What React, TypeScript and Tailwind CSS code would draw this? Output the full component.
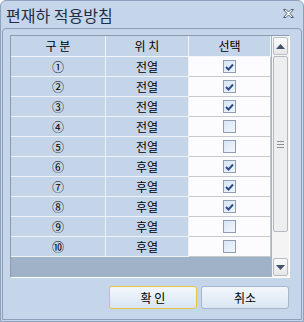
import React from "react";

const rows = [
  { no: "①", pos: "전열", on: true },
  { no: "②", pos: "전열", on: true },
  { no: "③", pos: "전열", on: true },
  { no: "④", pos: "전열", on: false },
  { no: "⑤", pos: "전열", on: false },
  { no: "⑥", pos: "후열", on: true },
  { no: "⑦", pos: "후열", on: true },
  { no: "⑧", pos: "후열", on: true },
  { no: "⑨", pos: "후열", on: false },
  { no: "⑩", pos: "후열", on: false },
];

function CheckBox({ on }: { on: boolean }) {
  return (
    <div className="flex h-[13px] w-[13px] items-center justify-center border border-[#8f9db3] bg-gradient-to-br from-[#d9e6f6] to-[#f1f6fc]">
      {on && (
        <svg width="9" height="8" viewBox="0 0 9 8">
          <path d="M1 4 L3.5 6.5 L8 1.5" fill="none" stroke="#2b4c8c" strokeWidth="2" />
        </svg>
      )}
    </div>
  );
}

function Arrow({ up }: { up: boolean }) {
  return (
    <svg width="9" height="5" viewBox="0 0 9 5">
      <path d={up ? "M0 5 L4.5 0 L9 5 Z" : "M0 0 L4.5 5 L9 0 Z"} fill="#43526a" />
    </svg>
  );
}

export default function App() {
  return (
    <div
      className="flex h-[322px] w-[304px] flex-col rounded-t-[6px] border border-[#8ea2bd] bg-[#c5d6ea] text-[12px] text-black"
      style={{ fontFamily: '"Noto Sans CJK KR", "Noto Sans", sans-serif' }}
    >
      {/* title bar */}
      <div className="flex h-[27px] items-center justify-between pl-[5px] pr-[9px]">
        <span className="text-[16px] leading-none text-[#1e2e44]">편재하 적용방침</span>
        <svg width="11" height="9" viewBox="0 0 11 9" className="mt-[-2px]">
          <path
            d="M0.5 0.5 H3 L5.5 3 L8 0.5 H10.5 L7 4.5 L10.5 8.5 H8 L5.5 6 L3 8.5 H0.5 L4 4.5 Z"
            fill="#ffffff"
            stroke="#4f5d72"
            strokeWidth="1"
          />
        </svg>
      </div>

      {/* inner frame */}
      <div className="mx-[1px] mb-[1px] flex flex-1 flex-col rounded-t-[4px] border border-[#8c9fb9] px-[7px] pt-[6px]">
        <div className="flex h-[243px] w-[280px] border border-[#8d9ab0] border-b-white border-r-white">
          <div className="flex w-[260px] flex-col">
            <div className="flex h-[21px]">
              <div className="flex w-[95px] items-center justify-center border-b border-r border-[#f2f5f9] bg-[#c5d5e9]">구 분</div>
              <div className="flex w-[83px] items-center justify-center border-b border-r border-[#f2f5f9] bg-[#c5d5e9]">위 치</div>
              <div className="flex w-[82px] items-center justify-center border-b border-r border-[#f2f5f9] bg-[#c5d5e9]">선택</div>
            </div>
            {rows.map((r) => (
              <div key={r.no} className="flex h-[20px]">
                <div className="flex w-[95px] items-center justify-center border-b border-r border-[#eef2f7] bg-[#c5d5e9]">{r.no}</div>
                <div className="flex w-[83px] items-center justify-center border-b border-r border-[#eef2f7] bg-[#c5d5e9]">{r.pos}</div>
                <div className="flex w-[82px] items-center justify-center border-b border-r border-[#c6c9ce] bg-[#fcfcff]">
                  <CheckBox on={r.on} />
                </div>
              </div>
            ))}
            <div className="flex-1 bg-[#a0b2c7]" />
          </div>

          {/* scrollbar */}
          <div className="flex w-[18px] flex-col border-l border-[#a5b3c5] bg-[#f4f4f4] p-px">
            <div className="flex h-[18px] items-center justify-center rounded-[2px] border border-[#b9bec6] bg-gradient-to-b from-[#fbfbfb] to-[#e6e6e6]">
              <Arrow up />
            </div>
            <div className="mt-px flex h-[176px] flex-col items-center justify-center gap-[2px] rounded-[2px] border border-[#b4b9c1] bg-[#eeeeee]">
              <div className="h-px w-[7px] bg-[#8a8f96]" />
              <div className="h-px w-[7px] bg-[#8a8f96]" />
              <div className="h-px w-[7px] bg-[#8a8f96]" />
            </div>
            <div className="flex-1" />
            <div className="flex h-[18px] items-center justify-center rounded-[2px] border border-[#b9bec6] bg-gradient-to-b from-[#fbfbfb] to-[#e6e6e6]">
              <Arrow up={false} />
            </div>
          </div>
        </div>

        <div className="mt-[8px] flex justify-end gap-[4px] pr-[5px]">
          <button className="h-[23px] w-[88px] rounded-[3px] border border-[#e9c441] bg-gradient-to-b from-[#f3f7fc] to-[#d9e5f3] text-[12px]">
            확 인
          </button>
          <button className="h-[23px] w-[88px] rounded-[3px] border border-[#a6b5c9] bg-gradient-to-b from-[#f3f7fc] to-[#d9e5f3] text-[12px]">
            취소
          </button>
        </div>
      </div>
    </div>
  );
}
